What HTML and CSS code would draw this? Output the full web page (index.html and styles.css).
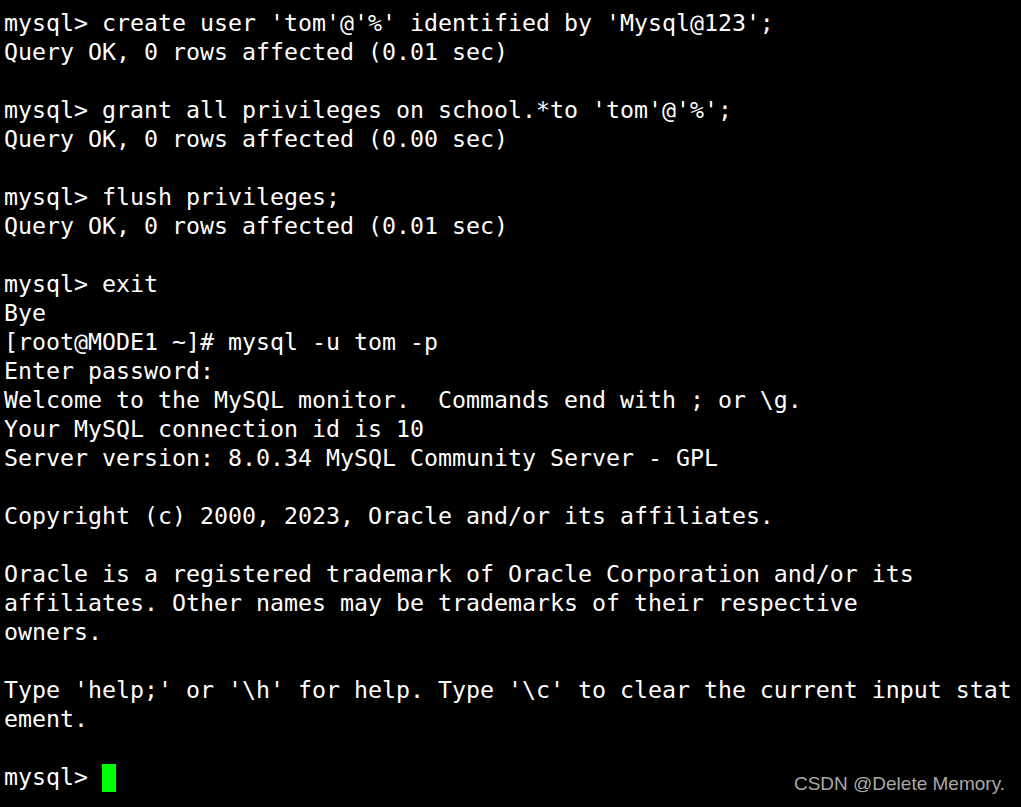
FILE: index.html
```html
<!DOCTYPE html>
<html>
<head>
<meta charset="utf-8">
<link rel="stylesheet" href="styles.css">
</head>
<body>
<main class="terminal">
<pre class="output">mysql&gt; create user 'tom'@'%' identified by 'Mysql@123';
Query OK, 0 rows affected (0.01 sec)

mysql&gt; grant all privileges on school.*to 'tom'@'%';
Query OK, 0 rows affected (0.00 sec)

mysql&gt; flush privileges;
Query OK, 0 rows affected (0.01 sec)

mysql&gt; exit
Bye
[root@MODE1 ~]# mysql -u tom -p
Enter password:
Welcome to the MySQL monitor.  Commands end with ; or \g.
Your MySQL connection id is 10
Server version: 8.0.34 MySQL Community Server - GPL

Copyright (c) 2000, 2023, Oracle and/or its affiliates.

Oracle is a registered trademark of Oracle Corporation and/or its
affiliates. Other names may be trademarks of their respective
owners.

Type 'help;' or '\h' for help. Type '\c' to clear the current input stat
ement.
</pre>
<div class="prompt-row">
<pre class="prompt">mysql&gt; <span class="cursor"></span></pre>
<div class="watermark">CSDN @Delete Memory.</div>
</div>
</main>
</body>
</html>
```
FILE: styles.css
```css
html, body {
  margin: 0;
  padding: 0;
  background: #000;
}
.terminal {
  width: 1021px;
  height: 807px;
  overflow: hidden;
  background: #000;
  padding-top: 8px;
  box-sizing: border-box;
}
.output,
.prompt {
  margin: 0;
  font-family: "DejaVu Sans Mono", "Liberation Mono", monospace;
  font-size: 23.25px;
  line-height: 29px;
  color: #ffffff;
  white-space: pre;
}
.output {
  padding-left: 4px;
  margin-bottom: 29px;
}
.prompt-row {
  display: flex;
  justify-content: space-between;
  align-items: flex-start;
  padding: 0 16px 0 4px;
}
.cursor {
  display: inline-block;
  width: 14px;
  height: 28px;
  background: #00ff00;
  vertical-align: -7px;
}
.watermark {
  margin-top: 11px;
  font-family: "Liberation Sans", Arial, sans-serif;
  font-size: 19px;
  color: #a8a8a8;
}
```
